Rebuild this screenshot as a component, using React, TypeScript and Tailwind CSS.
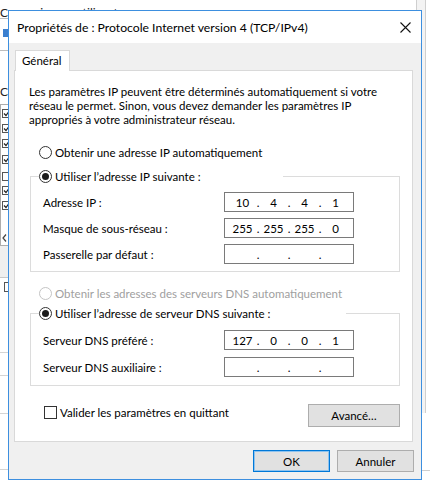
import React from "react";

function Radio({ checked = false, disabled = false }: { checked?: boolean; disabled?: boolean }) {
  return (
    <span
      className={
        disabled
          ? "flex h-[13px] w-[13px] shrink-0 items-center justify-center rounded-full border border-[#c4c4c4] bg-white"
          : "flex h-[13px] w-[13px] shrink-0 items-center justify-center rounded-full border border-[#333333] bg-white"
      }
    >
      {checked && <span className="h-[7px] w-[7px] rounded-full bg-[#1b1b1b]" />}
    </span>
  );
}

function IpField({ parts }: { parts: string[] }) {
  return (
    <div className="flex h-[20px] w-[130px] items-center justify-center border border-[#7a7a7a] bg-white">
      {parts.map((p, i) => (
        <React.Fragment key={i}>
          {i > 0 && <span className="w-[6px] text-center">.</span>}
          <span className="w-[25px] text-center">{p}</span>
        </React.Fragment>
      ))}
    </div>
  );
}

function FieldRow({ label, parts }: { label: string; parts: string[] }) {
  return (
    <div className="flex items-center pl-[4px]">
      <span className="w-[181px]">{label}</span>
      <IpField parts={parts} />
    </div>
  );
}

function Button({ label, primary = false, width }: { label: string; primary?: boolean; width: string }) {
  return (
    <div
      className={
        primary
          ? `flex h-[22px] ${width} items-center justify-center border border-[#0078d7] bg-[#e1e1e1] shadow-[inset_0_0_0_1px_#8fc3ee]`
          : `flex h-[22px] ${width} items-center justify-center border border-[#adadad] bg-[#e1e1e1]`
      }
    >
      {label}
    </div>
  );
}

function BgCheck({ top, checked = true }: { top: string; checked?: boolean }) {
  return (
    <div className={`absolute left-[2px] ${top} flex h-[9px] w-[9px] items-center justify-center border border-[#555555] bg-white`}>
      {checked && (
        <svg width="7" height="7" viewBox="0 0 7 7">
          <path d="M1 3.5 L3 5.5 L6 1.5" stroke="#222222" strokeWidth="1.2" fill="none" />
        </svg>
      )}
    </div>
  );
}

export default function App() {
  return (
    <div className="relative h-[485px] w-[430px] overflow-hidden bg-white font-['Lato',sans-serif] text-[11.5px] leading-[15px] text-black">
      {/* background window fragments */}
      <div className="absolute left-0 top-[5px] whitespace-nowrap text-[12px] text-[#222222]">Connexion en utilisant :</div>
      <div className="absolute left-0 top-0 h-[485px] w-[8px] overflow-hidden">
        <div className="absolute left-0 top-[18px] h-[33px] w-[20px] border-y border-[#bdbdbd]" />
        <div className="absolute left-[3px] top-[29px] h-[8px] w-[8px] bg-[#3b7fcf]" />
        <div className="absolute left-0 top-[84px] whitespace-nowrap text-[12px] text-[#222222]">Ce</div>
        <div className="absolute left-0 top-[104px] h-[142px] w-[20px] border border-[#adadad]" />
        <BgCheck top="top-[109px]" />
        <BgCheck top="top-[124px]" />
        <BgCheck top="top-[139px]" />
        <BgCheck top="top-[155px]" />
        <BgCheck top="top-[172px]" checked={false} />
        <BgCheck top="top-[186px]" />
        <BgCheck top="top-[201px]" />
        <svg className="absolute left-[2px] top-[234px]" width="5" height="8" viewBox="0 0 5 8">
          <path d="M4 0.5 L1 4 L4 7.5" stroke="#444444" strokeWidth="1.2" fill="none" />
        </svg>
        <div className="absolute left-0 top-[246px] h-[32px] w-[20px] border-b border-[#c8c8c8] bg-[#efefef]" />
        <div className="absolute left-[4px] top-[282px] h-[10px] w-[5px] border border-[#555555]" />
        <div className="absolute left-0 top-[352px] h-[24px] w-[20px] border-y border-[#d4d4d4]" />
        <div className="absolute left-0 top-[413px] h-[57px] w-[20px] border-y border-[#d4d4d4]" />
      </div>
      <div className="absolute left-[416px] top-0 h-[413px] w-[10px] border-x border-[#cfcfcf] bg-[#f3f3f3]" />
      <div className="absolute left-[416px] top-[470px] h-[1px] w-[14px] bg-[#cfcfcf]" />

      {/* dialog */}
      <div className="absolute left-[8px] top-[10px] flex h-[470px] w-[414px] flex-col border border-[#3d8fdf] bg-[#f0f0f0]">
        <div className="flex h-[32px] shrink-0 items-center bg-white pl-[8px] pr-[10px] text-[12.2px]">
          <span>Propriétés de : Protocole Internet version 4 (TCP/IPv4)</span>
          <svg className="ml-auto" width="11" height="11" viewBox="0 0 11 11">
            <path d="M0.5 0.5 L10.5 10.5 M10.5 0.5 L0.5 10.5" stroke="#111111" strokeWidth="1.1" fill="none" />
          </svg>
        </div>

        <div className="flex flex-1 flex-col pl-[5px] pt-[7px]">
          <div className="relative z-10 -mb-px ml-[1px] h-[21px] w-[55px] border border-b-0 border-[#d9d9d9] bg-white pl-[6px] leading-[20px]">
            Général
          </div>
          <div className="flex h-[372px] w-[399px] flex-col border border-[#d9d9d9] bg-white pl-[14px] pt-[14px]">
            <p className="leading-[14px]">
              Les paramètres IP peuvent être déterminés automatiquement si votre
              <br />
              réseau le permet. Sinon, vous devez demander les paramètres IP
              <br />
              appropriés à votre administrateur réseau.
            </p>

            <div className="ml-[10px] mt-[18px] flex h-[15px] items-center gap-[3px]">
              <Radio />
              <span>Obtenir une adresse IP automatiquement</span>
            </div>

            <fieldset className="ml-[1px] mt-[9px] flex w-[370px] flex-col gap-[6px] border border-[#dcdcdc] px-[8px] pb-[7px] pt-[8px]">
              <legend className="w-[244px]">
                <div className="flex h-[15px] items-center gap-[3px]">
                  <Radio checked />
                  <span>Utiliser l’adresse IP suivante :</span>
                </div>
              </legend>
              <FieldRow label="Adresse IP :" parts={["10", "4", "4", "1"]} />
              <FieldRow label="Masque de sous-réseau :" parts={["255", "255", "255", "0"]} />
              <FieldRow label="Passerelle par défaut :" parts={["", "", "", ""]} />
            </fieldset>

            <div className="ml-[10px] mt-[14px] flex h-[15px] items-center gap-[3px] text-[#a0a0a0]">
              <Radio disabled />
              <span>Obtenir les adresses des serveurs DNS automatiquement</span>
            </div>

            <fieldset className="ml-[1px] mt-[5px] flex w-[370px] flex-col gap-[7px] border border-[#dcdcdc] px-[8px] pb-[8px] pt-[9px]">
              <legend className="w-[307px]">
                <div className="flex h-[15px] items-center gap-[3px]">
                  <Radio checked />
                  <span>Utiliser l’adresse de serveur DNS suivante :</span>
                </div>
              </legend>
              <FieldRow label="Serveur DNS préféré :" parts={["127", "0", "0", "1"]} />
              <FieldRow label="Serveur DNS auxiliaire :" parts={["", "", "", ""]} />
            </fieldset>

            <div className="ml-[1px] mt-[18px] flex w-[370px] items-start justify-between">
              <div className="ml-[14px] mt-[1px] flex items-center gap-[3px]">
                <span className="h-[13px] w-[13px] border border-[#333333] bg-white" />
                <span>Valider les paramètres en quittant</span>
              </div>
              <div className="flex h-[23px] w-[92px] items-center justify-center border border-[#adadad] bg-[#e1e1e1]">
                Avancé…
              </div>
            </div>
          </div>

          <div className="mt-[8px] flex justify-end gap-[7px] pr-[7px]">
            <Button label="OK" primary width="w-[77px]" />
            <Button label="Annuler" width="w-[77px]" />
          </div>
        </div>
      </div>
    </div>
  );
}
